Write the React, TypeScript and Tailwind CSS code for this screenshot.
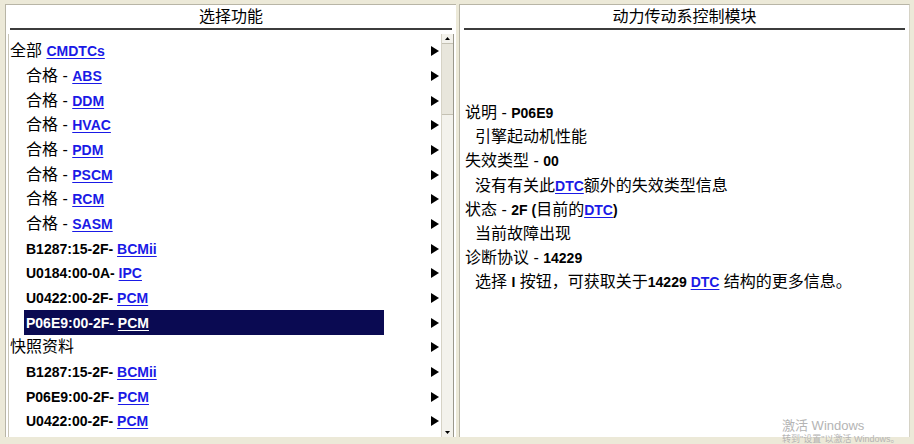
import React from "react";

type Part = { t: string; k: "cjk" | "code" | "link" };

const font = { fontFamily: '"Liberation Sans", "Noto Sans CJK SC", sans-serif' };

function Parts({ parts, selected }: { parts: Part[]; selected?: boolean }) {
  return (
    <span className="whitespace-pre">
      {parts.map((p, i) => {
        if (p.k === "cjk")
          return (
            <span key={i} className="text-[16px] font-normal">
              {p.t}
            </span>
          );
        if (p.k === "code")
          return (
            <span key={i} className="text-[14px] font-bold">
              {p.t}
            </span>
          );
        return (
          <span
            key={i}
            className={`text-[14px] font-bold underline underline-offset-2 ${
              selected ? "text-white" : "text-[#1a1ae6]"
            }`}
          >
            {p.t}
          </span>
        );
      })}
    </span>
  );
}

const pass = (m: string): Part[] => [
  { t: "合格 - ", k: "cjk" },
  { t: m, k: "link" },
];
const dtc = (c: string, m: string): Part[] => [
  { t: c + " ", k: "code" },
  { t: m, k: "link" },
];

const rows: { indent: boolean; parts: Part[]; selected?: boolean }[] = [
  { indent: false, parts: [{ t: "全部 ", k: "cjk" }, { t: "CMDTCs", k: "link" }] },
  { indent: true, parts: pass("ABS") },
  { indent: true, parts: pass("DDM") },
  { indent: true, parts: pass("HVAC") },
  { indent: true, parts: pass("PDM") },
  { indent: true, parts: pass("PSCM") },
  { indent: true, parts: pass("RCM") },
  { indent: true, parts: pass("SASM") },
  { indent: true, parts: dtc("B1287:15-2F-", "BCMii") },
  { indent: true, parts: dtc("U0184:00-0A-", "IPC") },
  { indent: true, parts: dtc("U0422:00-2F-", "PCM") },
  { indent: true, parts: dtc("P06E9:00-2F-", "PCM"), selected: true },
  { indent: false, parts: [{ t: "快照资料", k: "cjk" }] },
  { indent: true, parts: dtc("B1287:15-2F-", "BCMii") },
  { indent: true, parts: dtc("P06E9:00-2F-", "PCM") },
  { indent: true, parts: dtc("U0422:00-2F-", "PCM") },
];

const info: { indent: boolean; parts: Part[] }[] = [
  { indent: false, parts: [{ t: "说明 - ", k: "cjk" }, { t: "P06E9", k: "code" }] },
  { indent: true, parts: [{ t: "引擎起动机性能", k: "cjk" }] },
  { indent: false, parts: [{ t: "失效类型 - ", k: "cjk" }, { t: "00", k: "code" }] },
  {
    indent: true,
    parts: [
      { t: "没有有关此", k: "cjk" },
      { t: "DTC", k: "link" },
      { t: "额外的失效类型信息", k: "cjk" },
    ],
  },
  {
    indent: false,
    parts: [
      { t: "状态 - ", k: "cjk" },
      { t: "2F (", k: "code" },
      { t: "目前的", k: "cjk" },
      { t: "DTC", k: "link" },
      { t: ")", k: "code" },
    ],
  },
  { indent: true, parts: [{ t: "当前故障出现", k: "cjk" }] },
  { indent: false, parts: [{ t: "诊断协议 - ", k: "cjk" }, { t: "14229", k: "code" }] },
  {
    indent: true,
    parts: [
      { t: "选择 ", k: "cjk" },
      { t: "I", k: "code" },
      { t: " 按钮，可获取关于", k: "cjk" },
      { t: "14229 ", k: "code" },
      { t: "DTC", k: "link" },
      { t: " 结构的更多信息。", k: "cjk" },
    ],
  },
];

function Arrow() {
  return (
    <svg width="8" height="10" viewBox="0 0 8 10" className="shrink-0">
      <path d="M0 0 L8 5 L0 10 Z" fill="#000" />
    </svg>
  );
}

function Header({ title }: { title: string }) {
  return (
    <div className="shrink-0">
      <div className="h-[23px] flex items-center justify-center text-[16px] text-black">{title}</div>
      <div className="mx-[4px] h-[2px] bg-[#3c3c3c]" />
    </div>
  );
}

export default function App() {
  return (
    <div
      className="w-[914px] h-[444px] bg-[#ece9d8] flex gap-[3px] pl-[5px] pr-[4px] pt-[4px] overflow-hidden relative"
      style={font}
    >
      {/* left panel */}
      <div className="w-[451px] h-[433px] bg-white border-l border-t border-[#b8b5a6] flex flex-col">
        <Header title="选择功能" />
        <div className="flex-1 flex mt-[4px] ml-[2px] border-l border-[#c9c6b8] overflow-hidden">
          <div className="flex-1 pt-[5px] overflow-hidden">
            {rows.map((r, i) => (
              <div key={i} className="h-[24.67px] flex items-center">
                <div
                  className={`flex-1 h-full flex items-center ${r.indent ? "pl-[17px]" : "pl-[1px]"}`}
                >
                  <div
                    className={`h-full flex items-center ${
                      r.selected
                        ? "bg-[#0a0a52] text-white w-[360px] -ml-[2px] pl-[2px]"
                        : "text-black"
                    }`}
                  >
                    <Parts parts={r.parts} selected={r.selected} />
                  </div>
                </div>
                <div className="w-[14px] flex justify-start mr-[-4px]">
                  <Arrow />
                </div>
              </div>
            ))}
          </div>
          {/* scrollbar */}
          <div className="w-[13px] mr-[2px] bg-[#f3f2ec] border-l border-[#d6d3c6] border-r border-r-[#9a988c] flex flex-col relative">
            <div className="h-[9px] flex items-center justify-center">
              <svg width="5" height="3" viewBox="0 0 5 3">
                <path d="M0 3 L2.5 0 L5 3 Z" fill="#000" />
              </svg>
            </div>
            <div className="h-[72px] bg-[#e8e6dc] border-y border-[#c4c1b3]" />
            <div className="flex-1" />
            <div className="h-[9px] flex items-center justify-center">
              <svg width="5" height="3" viewBox="0 0 5 3">
                <path d="M0 0 L2.5 3 L5 0 Z" fill="#000" />
              </svg>
            </div>
          </div>
        </div>
      </div>

      {/* right panel */}
      <div className="flex-1 h-[433px] bg-white border-l border-t border-[#b8b5a6] border-r border-r-[#d6d3c6] flex flex-col">
        <Header title="动力传动系控制模块" />
        <div className="flex-1 pt-[71px] pl-[5px]">
          {info.map((r, i) => (
            <div
              key={i}
              className={`h-[24.2px] flex items-center text-black ${r.indent ? "pl-[10px]" : ""}`}
            >
              <Parts parts={r.parts} />
            </div>
          ))}
        </div>
      </div>

      {/* watermark */}
      <div className="absolute left-[782px] top-[419px] text-[#b4b4b4] leading-none pointer-events-none">
        <div className="text-[13px]">激活 Windows</div>
        <div className="text-[9px] mt-[3px]">转到"设置"以激活 Windows。</div>
      </div>
    </div>
  );
}
